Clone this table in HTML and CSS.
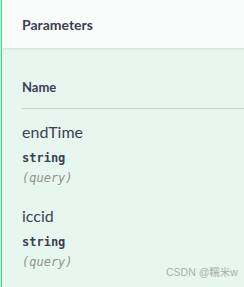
FILE: index.html
```html
<!DOCTYPE html>
<html lang="en">
<head>
<meta charset="utf-8">
<title>Parameters</title>
<link rel="stylesheet" href="styles.css">
</head>
<body>
<div class="opblock">
  <div class="section-header">
    <h4 class="title">Parameters</h4>
  </div>
  <div class="table-container">
    <div class="thead">Name</div>
    <div class="param-row">
      <div class="param-name">endTime</div>
      <div class="param-type">string</div>
      <div class="param-in">(query)</div>
    </div>
    <div class="param-row">
      <div class="param-name">iccid</div>
      <div class="param-type">string</div>
      <div class="param-in">(query)</div>
    </div>
  </div>
  <div class="watermark">CSDN @糯米w</div>
</div>
</body>
</html>
```
FILE: styles.css
```css
html, body {
  margin: 0;
  padding: 0;
}
body {
  background: #c4eadb;
  font-family: Lato, "Open Sans", sans-serif;
  color: #3b4151;
}
.opblock {
  position: relative;
  height: 287px;
  margin-left: 1px;
  border-left: 1px solid #49cc90;
  background: #e8f6f0;
  overflow: hidden;
}
.section-header {
  height: 48px;
  background: #fafcfb;
  box-shadow: 0 1px 2px rgba(0, 0, 0, 0.1);
  padding-left: 20px;
  display: flex;
  align-items: center;
  position: relative;
}
.title {
  margin: 0;
  font-size: 14px;
  font-weight: 700;
  line-height: 17px;
  color: #3b4151;
}
.table-container {
  padding-left: 20px;
}
.thead {
  margin-top: 31px;
  font-size: 13px;
  font-weight: 700;
  line-height: 17px;
  padding-bottom: 12px;
  border-bottom: 1px solid rgba(59, 65, 81, 0.2);
  margin-right: -20px;
}
.param-row {
  padding: 13px 0 5px;
  display: flex;
  flex-direction: column;
}
.param-name {
  font-size: 16px;
  font-weight: 400;
  line-height: 20px;
  margin-bottom: 6px;
}
.param-type {
  font-family: "DejaVu Sans Mono", monospace;
  font-size: 12px;
  font-weight: 700;
  line-height: 20px;
}
.param-in {
  font-family: "DejaVu Sans Mono", monospace;
  font-size: 12px;
  font-style: italic;
  line-height: 20px;
  color: #8f9190;
}
.watermark {
  position: absolute;
  left: 164px;
  top: 265px;
  font-family: "Liberation Sans", "Noto Sans CJK SC", sans-serif;
  font-size: 10.5px;
  line-height: 14px;
  color: #a9afad;
}
```
